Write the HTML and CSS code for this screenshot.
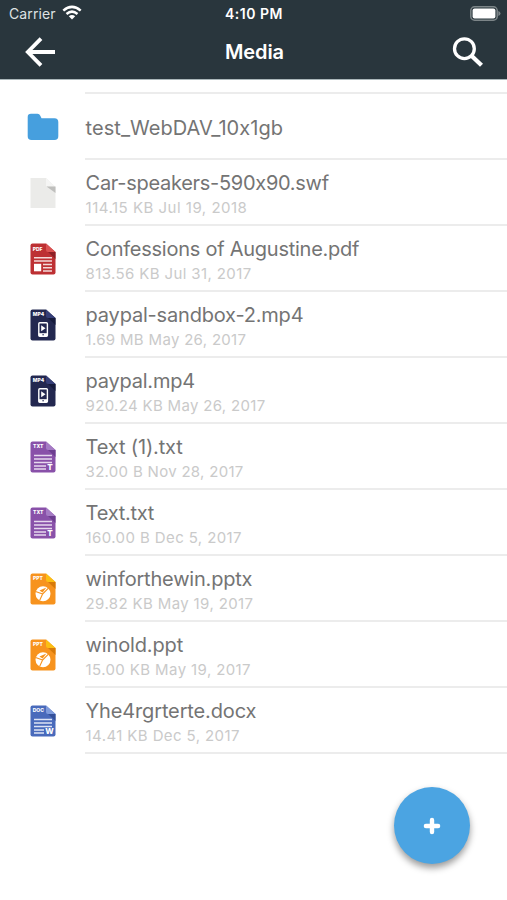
FILE: index.html
```html
<!DOCTYPE html>
<html lang="en">
<head>
<meta charset="utf-8">
<title>Media</title>
<link rel="stylesheet" href="styles.css">
</head>
<body>
<svg class="defs" width="0" height="0">
  <defs>
    <symbol id="page" viewBox="0 0 26 32">
      <path d="M2.5 0.5H16L25.5 9V29.5Q25.5 31.5 23.5 31.5H2.5Q0.5 31.5 0.5 29.5V2.5Q0.5 .5 2.5 .5Z" fill="currentColor"/>
    </symbol>
    <symbol id="movie" viewBox="0 0 26 32">
      <use href="#page"/>
      <path d="M16 .5V7Q16 9 18 9H25.5Z" fill="#363f78"/>
      <path d="M18 9H25.5V16Z" fill="#151a3c"/>
      <rect x="8.8" y="13.8" width="8.6" height="13.4" rx="1" fill="none" stroke="#fff" stroke-width="1.4"/>
      <path d="M8.8 24.2h8.6v3H8.8z" fill="#fff"/>
      <path d="M11.2 16.3V22.3L15.5 19.3Z" fill="#fff"/>
      <circle cx="13.1" cy="25.8" r=".8" fill="#262b57"/>
    </symbol>
    <symbol id="text" viewBox="0 0 26 32">
      <use href="#page"/>
      <path d="M16 .5V7Q16 9 18 9H25.5Z" fill="#a57bc4"/>
      <path d="M18 9H25.5V16Z" fill="#6d3e90"/>
      <path d="M4 14.5H22M4 18H22M4 21.5H22M4 25H16M4 28H16" stroke="#e6d9ee" stroke-width="1.4"/>
    </symbol>
    <symbol id="slides" viewBox="0 0 26 32">
      <use href="#page"/>
      <path d="M16 .5V7Q16 9 18 9H25.5Z" fill="#fbbf14"/>
      <path d="M18 9H25.5V16Z" fill="#d87a09"/>
      <circle cx="13" cy="20.8" r="7.5" fill="#fff"/>
      <path d="M12.6 21L19.2 14.4M12.6 21L9.6 27.6M12.6 21L5.6 18.6" stroke="#f7931e" stroke-width="1.1"/>
      <path d="M9.5 17.6L16.4 14.6L12.6 19.6Z" fill="#f7931e"/>
    </symbol>
  </defs>
</svg>

<header class="header">
  <div class="status">
    <div class="carrier">
      <span>Carrier</span>
      <svg width="20" height="16" viewBox="0 0 20 16" fill="none" stroke="#fff" stroke-width="2.5">
        <path d="M1.3 5.6Q10-1.9 18.7 5.6M4.5 9Q10 4.3 15.5 9"/>
        <path d="M10 14.5L6.8 11.2Q10 8.8 13.2 11.2Z" fill="#fff" stroke="none"/>
      </svg>
    </div>
    <span class="time">4:10 PM</span>
    <svg class="battery" width="31" height="15" viewBox="0 0 31 15">
      <rect x=".8" y=".8" width="26.4" height="13.4" rx="3.8" fill="none" stroke="#7c8588" stroke-width="1.5"/>
      <rect x="2.6" y="2.5" width="22.8" height="10" rx="2" fill="#fff"/>
      <path d="M28.3 5Q30.5 5.8 30.5 7.5T28.3 10Z" fill="#7c8588"/>
    </svg>
  </div>
  <nav class="nav">
    <svg width="32" height="30" viewBox="0 0 32 30" fill="none" stroke="#fff" stroke-width="3.8">
      <path d="M16 1.6L2.8 15L16 28.4M3 15H30"/>
    </svg>
    <h1>Media</h1>
    <svg width="32" height="32" viewBox="0 0 32 32" fill="none" stroke="#fff">
      <circle cx="12.4" cy="12.7" r="9.9" stroke-width="3.3"/>
      <path d="M19.2 19.5L29.5 29.3" stroke-width="4.3"/>
    </svg>
  </nav>
</header>

<main class="list">
  <div class="row">
    <svg class="icon folder" viewBox="0 0 32 28"><path d="M4 .8H10.5Q12.5 .8 13.3 2.7L14.5 5.2H27.5Q31.3 5.2 31.3 9V23.2Q31.3 27 27.5 27H4.5Q.7 27 .7 23.2V4Q.7.8 4 .8Z" fill="#469fde"/></svg>
    <div class="info"><div class="name n0">test_WebDAV_10x1gb</div></div>
  </div>
  <div class="row">
    <svg class="icon" viewBox="0 0 26 32"><path d="M.5 1H16L25.5 10V31H.5Z" fill="#ebebe9"/><path d="M16 1V9.5H25Z" fill="#f5f5f4"/><path d="M16.5 9.5H25.5V16Z" fill="#bfbfbd"/></svg>
    <div class="info"><div class="name n1">Car-speakers-590x90.swf</div><div class="meta m1">114.15 KB Jul 19, 2018</div></div>
  </div>
  <div class="row">
    <svg class="icon pdf" viewBox="0 0 26 32"><use href="#page"/><path d="M16 .5V7Q16 9 18 9H25.5Z" fill="#da5252"/><path d="M18 9H25.5V16Z" fill="#8e2026"/><path d="M4 14.7H22M4 18H22M13 21.5H22M13 24.7H22M13 28H22" stroke="#f3dada" stroke-width="1.4"/><path d="M4 20.8h7.2v7.5H4z" fill="#fff"/><text x="2.7" y="7.6" class="ext">PDF</text></svg>
    <div class="info"><div class="name n2">Confessions of Augustine.pdf</div><div class="meta m2">813.56 KB Jul 31, 2017</div></div>
  </div>
  <div class="row">
    <svg class="icon mp4" viewBox="0 0 26 32"><use href="#movie"/><text x="2.7" y="7.4" class="ext">MP4</text></svg>
    <div class="info"><div class="name n3">paypal-sandbox-2.mp4</div><div class="meta m3">1.69 MB May 26, 2017</div></div>
  </div>
  <div class="row">
    <svg class="icon mp4" viewBox="0 0 26 32"><use href="#movie"/><text x="2.7" y="7.4" class="ext">MP4</text></svg>
    <div class="info"><div class="name n4">paypal.mp4</div><div class="meta m4">920.24 KB May 26, 2017</div></div>
  </div>
  <div class="row">
    <svg class="icon txt" viewBox="0 0 26 32"><use href="#text"/><text x="3" y="7.4" class="ext">TXT</text><text x="17.3" y="28.8" class="letter">T</text></svg>
    <div class="info"><div class="name n5">Text (1).txt</div><div class="meta m5">32.00 B Nov 28, 2017</div></div>
  </div>
  <div class="row">
    <svg class="icon txt" viewBox="0 0 26 32"><use href="#text"/><text x="3" y="7.4" class="ext">TXT</text><text x="17.3" y="28.8" class="letter">T</text></svg>
    <div class="info"><div class="name n6">Text.txt</div><div class="meta m6">160.00 B Dec 5, 2017</div></div>
  </div>
  <div class="row">
    <svg class="icon ppt" viewBox="0 0 26 32"><use href="#slides"/><text x="3" y="7.4" class="ext">PPT</text></svg>
    <div class="info"><div class="name n7">winforthewin.pptx</div><div class="meta m7">29.82 KB May 19, 2017</div></div>
  </div>
  <div class="row">
    <svg class="icon ppt" viewBox="0 0 26 32"><use href="#slides"/><text x="3" y="7.4" class="ext">PPT</text></svg>
    <div class="info"><div class="name n8">winold.ppt</div><div class="meta m8">15.00 KB May 19, 2017</div></div>
  </div>
  <div class="row">
    <svg class="icon doc" viewBox="0 0 26 32"><use href="#page"/><path d="M16 .5V7Q16 9 18 9H25.5Z" fill="#7e9bdc"/><path d="M18 9H25.5V16Z" fill="#34509a"/><path d="M4 14.5H22M4 18H22M4 21.5H22M4 25H14M4 28H14" stroke="#dde4f5" stroke-width="1.4"/><text x="2.7" y="7.4" class="ext">DOC</text><text x="15.2" y="28.8" class="letter">W</text></svg>
    <div class="info"><div class="name n9">Yhe4rgrterte.docx</div><div class="meta m9">14.41 KB Dec 5, 2017</div></div>
  </div>
</main>

<button class="fab" aria-label="Add">
  <svg width="18" height="18" viewBox="0 0 18 18" stroke="#fff" stroke-width="4.4" stroke-linecap="round"><path d="M9 2.9V15.1M2.9 9H15.1"/></svg>
</button>
</body>
</html>
```
FILE: styles.css
```css
* {
  box-sizing: border-box;
}

body {
  margin: 0;
  height: 900px;
  overflow: hidden;
  background: #fff;
  font-family: Inter, "Liberation Sans", sans-serif;
  font-feature-settings: "calt" 0;
}

.defs {
  position: absolute;
}

.header {
  height: 79px;
  background: #29363d;
  color: #fff;
  box-shadow: 0 1px 0 #aab7ba;
}

.status {
  display: grid;
  grid-template-columns: 1fr auto 1fr;
  align-items: center;
  height: 27px;
  padding: 0 6px 0 9px;
}

.carrier {
  display: flex;
  align-items: center;
  gap: 6px;
  font-size: 14px;
  letter-spacing: 0.1px;
  color: #dfe2e3;
}

.carrier svg {
  margin-top: -1px;
}

.time {
  margin-left: -2px;
  font-size: 14px;
  font-weight: 600;
  letter-spacing: 0.5px;
}

.battery {
  justify-self: end;
}

.nav {
  display: grid;
  grid-template-columns: 32px 1fr 32px;
  align-items: center;
  height: 50px;
  padding: 0 23px 0 25px;
}

.nav h1 {
  margin: 0;
  font-size: 20px;
  font-weight: 600;
  letter-spacing: -0.1px;
  text-align: center;
}

.list {
  padding-top: 13px;
}

.list::before {
  content: "";
  display: block;
  height: 2px;
  margin-left: 85px;
  background: #ececec;
}

.row {
  display: grid;
  grid-template-columns: 85px 1fr;
  align-items: center;
  height: 66px;
}

.icon {
  justify-self: center;
  width: 26px;
  height: 32px;
}

.folder {
  width: 32px;
  height: 28px;
}

.info {
  display: flex;
  flex-direction: column;
  justify-content: center;
  height: 66px;
  padding: 4px 0 0 0.6px;
  border-bottom: 2px solid #ececec;
  white-space: nowrap;
}

.name {
  width: max-content;
  font-size: 20px;
  line-height: 26px;
  color: #747474;
}

.meta {
  width: max-content;
  font-size: 15px;
  line-height: 23px;
  color: #cacaca;
}

/* Optical tracking per label */
.n0 { letter-spacing: 0.05px; }
.n1 { letter-spacing: -0.29px; }
.n2 { letter-spacing: -0.25px; }
.n3 { letter-spacing: -0.19px; }
.n4 { letter-spacing: -0.23px; }
.n5 { letter-spacing: -0.16px; }
.n6 { letter-spacing: -0.25px; }
.n7 { letter-spacing: -0.2px; }
.n8 { letter-spacing: -0.14px; }
.n9 { letter-spacing: -0.14px; }

.m1 { letter-spacing: 0.5px; }
.m2 { letter-spacing: 0.38px; }
.m3 { letter-spacing: 0.31px; }
.m4 { letter-spacing: 0.32px; }
.m5 { letter-spacing: 0.3px; }
.m6 { letter-spacing: 0.4px; }
.m7 { letter-spacing: 0.37px; }
.m8 { letter-spacing: 0.39px; }
.m9 { letter-spacing: 0.4px; }

.ext {
  font-size: 5px;
  font-weight: 800;
  fill: #fff;
}

.letter {
  font-size: 8px;
  font-weight: 800;
  fill: #fff;
}

.pdf { color: #bd3033; }
.mp4 { color: #232850; }
.txt { color: #8951a9; }
.ppt { color: #f7931e; }
.doc { color: #496abb; }

.fab {
  position: absolute;
  left: 394px;
  top: 787px;
  display: grid;
  place-items: center;
  width: 76px;
  height: 77px;
  padding: 0;
  border: 0;
  border-radius: 50%;
  background: #4ba4e2;
  box-shadow: 0 4px 7px rgba(0, 0, 0, 0.4);
}
```
